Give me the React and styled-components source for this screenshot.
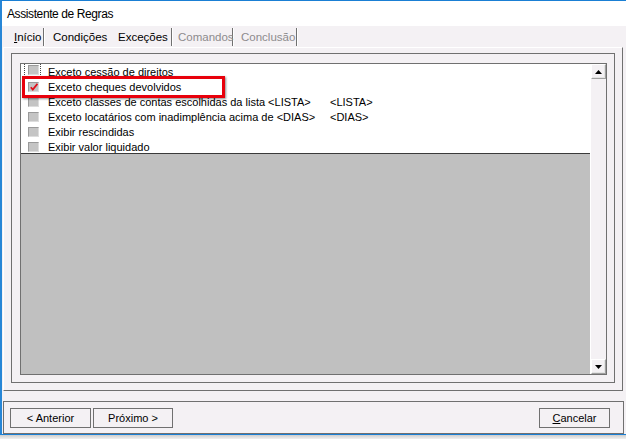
import React from 'react';
import styled, { createGlobalStyle } from 'styled-components';

const GlobalStyle = createGlobalStyle`
    html, body {
        margin: 0;
        padding: 0;
        background: #ffffff;
    }
    body {
        font-family: "Liberation Sans", Arial, sans-serif;
        font-size: 11px;
        color: #000000;
    }
`

const LINE = '#707070';
const FACE = '#f4f1f4';

const Window = styled.div`
    width: 626px;
    height: 435px;
    box-sizing: border-box;
    border-top: 1px solid #1a7fd4;
    border-left: 2px solid #2786d6;
    border-bottom: 1px solid #1a7fd4;
    display: flex;
    flex-direction: column;
    background: ${FACE};
`

const Shadow = styled.div`
    width: 626px;
    height: 4px;
    background: linear-gradient(#cdcdcd, #f0f0f0);
`

const TitleBar = styled.div`
    height: 25px;
    background: #ffffff;
    display: flex;
    align-items: center;
    padding-left: 5px;
    font-size: 12px;
    letter-spacing: -0.4px;
`

const TabStrip = styled.div`
    height: 21px;
    display: flex;
    align-items: flex-end;
    padding-left: 9px;
`

const Tab = styled.div`
    box-sizing: border-box;
    width: ${p => p.$w}px;
    height: 18px;
    margin-bottom: 1px;
    padding-left: ${p => p.$pl}px;
    display: flex;
    align-items: center;
    white-space: nowrap;
    font-size: 11.5px;
    color: ${p => (p.$disabled ? '#8d8b8d' : '#000000')};
    border-right: ${p => (p.$sep ? `1px solid ${LINE}` : '1px solid transparent')};
    box-shadow: ${p => (p.$sep ? '1px 0 0 #ffffff' : 'none')};
`

const Pane = styled.div`
    box-sizing: border-box;
    margin-left: 1px;
    width: 620px;
    height: 344px;
    border-top: 1px solid #ffffff;
    border-left: 1px solid #ffffff;
    border-right: 1px solid ${LINE};
    border-bottom: 1px solid ${LINE};
    padding: 5px 7px 7px 7px;
    display: flex;
`

const Frame = styled.div`
    flex: 1;
    border: 1px solid ${LINE};
    padding: 9px 7px 7px 8px;
    display: flex;
`

const ListBox = styled.div`
    flex: 1;
    border: 1px solid ${LINE};
    display: flex;
`

const ListArea = styled.div`
    flex: 1;
    display: flex;
    flex-direction: column;
    position: relative;
    background: #c0c0c0;
`

const Rows = styled.div`
    height: 89px;
    overflow: hidden;
    background: #ffffff;
    border-bottom: 1px solid #3a3a3a;
`

const Row = styled.div`
    height: 15px;
    display: grid;
    grid-template-columns: 17px 289px auto;
    align-items: center;
    padding-left: 3px;
    white-space: nowrap;
`

const CheckCell = styled.div`
    box-sizing: border-box;
    width: 17px;
    height: ${p => (p.$focused ? '14px' : '15px')};
    align-self: start;
    margin-top: ${p => (p.$focused ? '-1px' : '0')};
    display: flex;
    align-items: center;
    padding-left: 3px;
    border: 1px dotted ${p => (p.$focused ? '#444444' : 'transparent')};
`

const Box = styled.div`
    box-sizing: border-box;
    width: 11px;
    height: 10px;
    background: #c4c4c4;
    border-top: 1px solid #9a9a9a;
    border-left: 1px solid #9a9a9a;
    border-bottom: 1px solid #dcdcdc;
    border-right: 1px solid #dcdcdc;
    display: flex;
    align-items: center;
    justify-content: center;
`

const Label = styled.span`
    padding-left: 7px;
`

const Highlight = styled.div`
    position: absolute;
    left: 1px;
    top: 12px;
    width: 203px;
    height: 22px;
    box-sizing: border-box;
    border: 3px solid #e8000b;
    box-shadow: 1px 1px 2px rgba(0, 0, 0, 0.45);
    pointer-events: none;
`

const ScrollBar = styled.div`
    width: 16px;
    display: flex;
    flex-direction: column;
    background: ${FACE};
    border-left: 1px solid #ffffff;
    box-sizing: border-box;
`

const Track = styled.div`
    flex: 1;
`

const ArrowButton = styled.div`
    height: 15px;
    box-sizing: border-box;
    border-top: 1px solid #ffffff;
    border-left: 1px solid #ffffff;
    border-right: 1px solid #a0a0a0;
    border-bottom: 1px solid #a0a0a0;
    box-shadow: inset -1px -1px 0 #e3e3e3;
    display: flex;
    align-items: center;
    justify-content: center;
`

const BottomBar = styled.div`
    box-sizing: border-box;
    margin-top: 10px;
    margin-left: 1px;
    width: 621px;
    height: 33px;
    border: 1px solid ${LINE};
    padding: 6px 13px 0 6px;
    display: flex;
    align-items: flex-start;
    gap: 2px;
`

const Button = styled.button`
    box-sizing: border-box;
    width: ${p => p.$w}px;
    height: 20px;
    margin-left: ${p => (p.$push ? 'auto' : '0')};
    border: 1px solid ${LINE};
    background: ${FACE};
    font-family: "Liberation Sans", Arial, sans-serif;
    font-size: 11px;
    color: #000000;
    padding: 0;
    display: flex;
    align-items: center;
    justify-content: center;
`

const tabs = [
    { label: <><u>I</u>nício</>, w: 33, pl: 3, sep: true },
    { label: 'Condições', w: 64, pl: 9 },
    { label: 'Exceções', w: 64, pl: 10, sep: true },
    { label: 'Comandos', w: 61, pl: 6, sep: true, disabled: true },
    { label: 'Conclusão', w: 64, pl: 8, sep: true, disabled: true },
];

const rules = [
    { text: 'Exceto cessão de direitos', focused: true },
    { text: 'Exceto cheques devolvidos', checked: true },
    { text: 'Exceto classes de contas escolhidas da lista <LISTA>', value: '<LISTA>' },
    { text: 'Exceto locatários com inadimplência acima de <DIAS>', value: '<DIAS>' },
    { text: 'Exibir rescindidas' },
    { text: 'Exibir valor liquidado' },
];

const Triangle = ({ down }) => (
    <svg width="7" height="4" viewBox="0 0 7 4">
        <polygon points={down ? '0,0 7,0 3.5,4' : '0,4 7,4 3.5,0'} fill="#000" />
    </svg>
);

const Check = () => (
    <svg width="8" height="8" viewBox="0 0 8 8">
        <path d="M0.8 4.2 L2.8 6.6 L7.4 0.8" stroke="#e0101a" strokeWidth="1.7" fill="none" />
    </svg>
);

const App = () => (
    <>
        <GlobalStyle />
        <Window>
            <TitleBar>Assistente de Regras</TitleBar>
            <TabStrip>
                {tabs.map((t, i) => (
                    <Tab key={i} $w={t.w} $pl={t.pl} $sep={t.sep} $disabled={t.disabled}>{t.label}</Tab>
                ))}
            </TabStrip>
            <Pane>
                <Frame>
                    <ListBox>
                        <ListArea>
                            <Rows>
                                {rules.map((r, i) => (
                                    <Row key={i}>
                                        <CheckCell $focused={r.focused}>
                                            <Box>{r.checked && <Check />}</Box>
                                        </CheckCell>
                                        <Label>{r.text}</Label>
                                        <span>{r.value}</span>
                                    </Row>
                                ))}
                            </Rows>
                            <Highlight />
                        </ListArea>
                        <ScrollBar>
                            <ArrowButton><Triangle /></ArrowButton>
                            <Track />
                            <ArrowButton><Triangle down /></ArrowButton>
                        </ScrollBar>
                    </ListBox>
                </Frame>
            </Pane>
            <BottomBar>
                <Button $w={81}>&lt; Anterior</Button>
                <Button $w={80}>Próximo &gt;</Button>
                <Button $w={71} $push><u>C</u>ancelar</Button>
            </BottomBar>
        </Window>
        <Shadow />
    </>
);

export default App;
